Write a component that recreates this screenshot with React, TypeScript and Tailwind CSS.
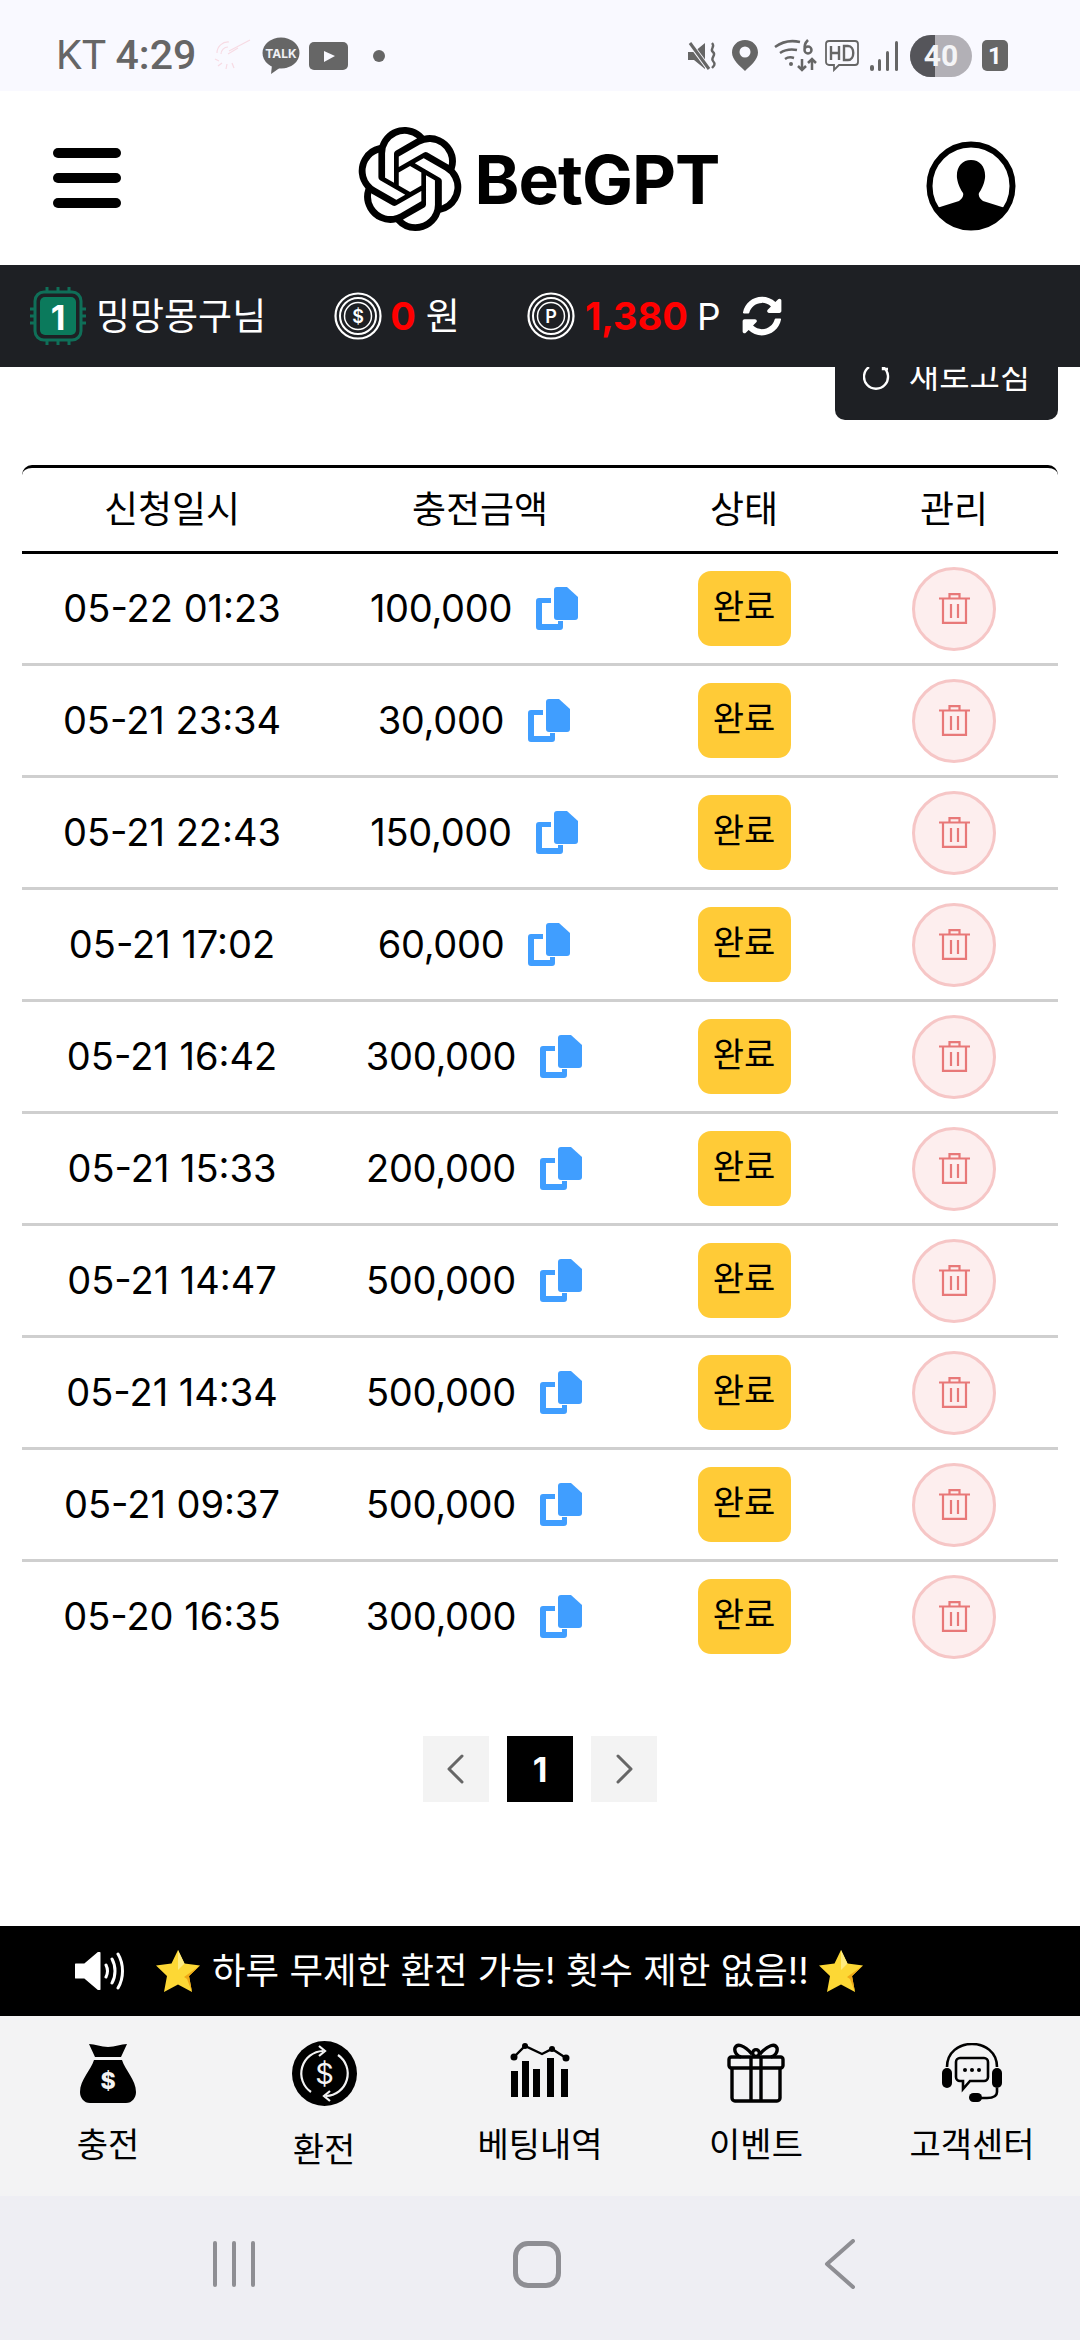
import { SiOpenai } from 'react-icons/si';
import { FaSyncAlt } from 'react-icons/fa';

const rows = [
  { date: '05-22 01:23', amount: '100,000' },
  { date: '05-21 23:34', amount: '30,000' },
  { date: '05-21 22:43', amount: '150,000' },
  { date: '05-21 17:02', amount: '60,000' },
  { date: '05-21 16:42', amount: '300,000' },
  { date: '05-21 15:33', amount: '200,000' },
  { date: '05-21 14:47', amount: '500,000' },
  { date: '05-21 14:34', amount: '500,000' },
  { date: '05-21 09:37', amount: '500,000' },
  { date: '05-20 16:35', amount: '300,000' },
];

const StatusLeft = () => (
  <div className="flex items-center">
    <svg width="40" height="34" viewBox="0 0 40 34" fill="none" stroke="#f7dbe4" strokeWidth="1.2" className="ml-[16px]">
      <path d="M5 14a11 11 0 0 1 12-11M9 15a7 7 0 0 1 7-7M17 12 38 1M26 9 16 15M3 20l4 2M6 27l4-3M14 30l1-5M22 29l-2-5" />
    </svg>
    <svg width="38" height="38" viewBox="0 0 38 38" className="ml-[10px]">
      <ellipse cx="19" cy="16" rx="18.500" ry="15.500" fill="#666" />
      <path d="M10 28l-1 9 10-7z" fill="#666" />
      <text x="19" y="21" textAnchor="middle" fontSize="12" fontWeight="700" fontFamily="Inter" fill="#f0f0f4">TALK</text>
    </svg>
    <svg width="39" height="28" viewBox="0 0 39 28" className="ml-[9px]">
      <rect width="39" height="28" rx="5" fill="#666" />
      <path d="M15 9l11 5-11 6z" fill="#f9f9ff" />
    </svg>
    <span className="ml-[25px] w-[12px] h-[12px] rounded-full bg-[#666]" />
  </div>
);

const StatusRight = () => (
  <div className="flex items-center">
    <svg width="30" height="30" viewBox="0 0 30 30" className="mr-[15px]">
      <path d="M1 11h6l11-9v26l-11-9H1z" fill="#666" />
      <path d="M2 1l20 27" stroke="#f9f9ff" strokeWidth="5" />
      <path d="M3 2l19 26" stroke="#666" strokeWidth="3" />
      <path d="M25 2c4 4-3 6 1 9s-3 6 0 9 1 5-1 7" stroke="#666" strokeWidth="2.400" fill="none" />
    </svg>
    <svg width="26" height="31" viewBox="0 0 26 31" className="mr-[16px]">
      <path d="M13 0C5.500 0 0 5.500 0 12.500 0 20 8 26 13 31c5-5 13-11 13-18.500C26 5.500 20.500 0 13 0z" fill="#666" />
      <circle cx="13" cy="12" r="5.500" fill="#f9f9ff" />
    </svg>
    <svg width="43" height="33" viewBox="0 0 43 33" fill="none" stroke="#666" strokeWidth="2.500" className="mr-[8px]">
      <path d="M1 8c8-6 16-7 25-5M6 14c6-4 12-4 17-3M11 20c3-2 6-2 9-1" />
      <circle cx="17" cy="25" r="2" fill="#666" stroke="none" />
      <path d="M34 1c-3 3-4 6-3 9M28 20v11M24 27l4 4 4-4M38 31V20M34 24l4-4 4 4" />
      <circle cx="34" cy="11" r="3.500" />
    </svg>
    <svg width="34" height="32" viewBox="0 0 34 32" fill="none" stroke="#666" strokeWidth="1.800" className="mr-[11px]">
      <path d="M4 1h26a3 3 0 0 1 3 3v18a3 3 0 0 1-3 3H14l-5 5v-5H4a3 3 0 0 1-3-3V4a3 3 0 0 1 3-3z" />
      <path d="M6 6v14M6 13h8M14 6v14M19 6v14h4c7 0 7-14 0-14z" strokeWidth="2.400" />
    </svg>
    <svg width="28" height="30" viewBox="0 0 28 30" fill="#666" className="mr-[12px]">
      <rect x="0" y="24" width="4" height="6" rx="2" />
      <rect x="8" y="18" width="3" height="12" rx="1.500" />
      <rect x="16" y="10" width="3" height="20" rx="1.500" />
      <rect x="25" y="0" width="3" height="30" rx="1.500" />
    </svg>
    <div className="relative w-[62px] h-[42px] rounded-full overflow-hidden bg-[#b2b0b6] mr-[10px]">
      <div className="absolute left-0 top-0 h-full w-[25px] bg-[#55555a]" />
      <span className="absolute inset-0 flex items-center justify-center text-[#f4f4f6] text-[30px] font-bold font-['Roboto',sans-serif]">40</span>
    </div>
    <div className="w-[26px] h-[31px] rounded-[5px] bg-[#666] flex items-center justify-center text-[#f9f9ff] text-[24px] font-bold font-['Roboto',sans-serif]">1</div>
  </div>
);

const Coin = ({ mark }: { mark: string }) => (
  <svg width="48" height="48" viewBox="0 0 48 48" fill="none" stroke="#fff">
    <circle cx="24" cy="24" r="22.500" strokeWidth="2.200" />
    <circle cx="24" cy="24" r="18" strokeWidth="2" />
    <circle cx="24" cy="24" r="13.500" strokeWidth="1.500" />
    <text x="24" y="30.500" textAnchor="middle" fontSize="18" fontWeight="600" fontFamily="Inter" fill="#fff" stroke="none">{mark}</text>
  </svg>
);

const Chip = () => (
  <svg width="56" height="58" viewBox="0 0 56 58">
    <path d="M6 22H0M6 29H0M6 36H0M56 22h-6M56 29h-6M56 36h-6M17 6V0M28 6V0M39 6V0M17 58v-6M28 58v-6M39 58v-6" stroke="#0f6f58" strokeWidth="3" />
    <rect x="5" y="5" width="46" height="48" rx="9" fill="#1e2024" stroke="#0f6f58" strokeWidth="3" />
    <rect x="10" y="10" width="36" height="38" rx="5" fill="#0b7a5c" />
    <text x="28" y="43" textAnchor="middle" fontSize="34" fontWeight="700" fontFamily="Inter" fill="#fff">1</text>
  </svg>
);

const CopyIcon = () => (
  <svg width="42" height="43" viewBox="0 0 42 43" fill="#409eff">
    <path d="M21 0h10l11 10v20a3 3 0 0 1-3 3H21a3 3 0 0 1-3-3V3a3 3 0 0 1 3-3z" />
    <path d="M15 11v5H6v21h16v-3h5v6a3 3 0 0 1-3 3H3a3 3 0 0 1-3-3V14a3 3 0 0 1 3-3z" />
  </svg>
);

const TrashIcon = () => (
  <svg width="31" height="31" viewBox="0 0 31 31" fill="none" stroke="#e87878" strokeWidth="2.200">
    <path d="M0 5.500h31M10.500 5.500V1.200h10v4.300M4 5.500v24.300h23V5.500M12 11v14M19 11v14" />
  </svg>
);

const Star = () => (
  <svg width="44" height="42" viewBox="0 0 44 42">
    <path d="M22 0l6.500 13.500L44 15.500 33 26l3 16-14-7.500L8 42l3-16L0 15.500l15.500-2z" fill="#fdd835" />
    <path d="M22 0l6.500 13.500L22 20z" fill="#ffec80" />
    <path d="M44 15.500 33 26l3 16-5-13-3-2z" fill="#f0a818" />
  </svg>
);

const BagIcon = () => (
  <svg width="56" height="60" viewBox="0 0 56 60">
    <path d="M9 1c6 0 12 3 19 3s13-3 19-3l-6 13H15z" fill="#000" />
    <path d="M14 17h28c3 10 14 20 14 32 0 6-4 11-10 11H10C4 60 0 55 0 49c0-12 11-22 14-32z" fill="#000" />
    <text x="28" y="46" textAnchor="middle" fontSize="23" fontWeight="800" fontFamily="Inter" fill="#f3f3f4">$</text>
  </svg>
);

const ExchangeIcon = () => (
  <svg width="65" height="65" viewBox="0 0 65 65">
    <circle cx="32.500" cy="32.500" r="32.500" fill="#000" />
    <path d="M19 51A22.500 22.500 0 0 1 31 10M46 14a22.500 22.500 0 0 1-12 41" fill="none" stroke="#f3f3f4" strokeWidth="2.200" />
    <path d="M27 5l6 5-6 5M38 50l-6 5 6 5" fill="none" stroke="#f3f3f4" strokeWidth="2.200" />
    <text x="32.500" y="43" textAnchor="middle" fontSize="29" fontFamily="Inter" fill="#f3f3f4">$</text>
  </svg>
);

const ChartIcon = () => (
  <svg width="60" height="60" viewBox="0 0 60 60" fill="#000">
    <rect x="1" y="28" width="7" height="26" />
    <rect x="12" y="18" width="7" height="36" />
    <rect x="23" y="26" width="7" height="28" />
    <rect x="37" y="15" width="7" height="39" />
    <rect x="51" y="26" width="7" height="28" />
    <path d="M4 14 15 3l17 8 10-5 14 9" fill="none" stroke="#000" strokeWidth="2.400" />
    <circle cx="4" cy="14" r="3.500" />
    <circle cx="15" cy="3" r="3" />
    <circle cx="42" cy="6" r="3" />
    <circle cx="56" cy="15" r="3.500" />
  </svg>
);

const GiftIcon = () => (
  <svg width="58" height="60" viewBox="0 0 58 60" fill="none" stroke="#000" strokeWidth="3.400" strokeLinejoin="round">
    <rect x="2" y="14" width="54" height="11" rx="2.500" />
    <path d="M5 25v30a3 3 0 0 0 3 3h42a3 3 0 0 0 3-3V25M24 14v44M34 14v44" />
    <path d="M25 11C17 2 10 0 8 5c-1 4 2 8 6 9M33 11c8-9 15-11 17-6 1 4-2 8-6 9" />
    <circle cx="29" cy="10" r="3.400" />
  </svg>
);

const HeadsetIcon = () => (
  <svg width="60" height="60" viewBox="0 0 60 60" fill="none" stroke="#000" strokeWidth="2.600">
    <path d="M5 24C5 9 17 1 30 1s25 8 25 23" />
    <rect x="0" y="25" width="10" height="20" rx="5" fill="#000" stroke="none" />
    <rect x="50" y="25" width="10" height="20" rx="5" fill="#000" stroke="none" />
    <path d="M18 15h24a4 4 0 0 1 4 4v15a4 4 0 0 1-4 4H28l-7 8v-8h-3a4 4 0 0 1-4-4V19a4 4 0 0 1 4-4z" />
    <circle cx="23" cy="27" r="2" fill="#000" stroke="none" />
    <circle cx="30" cy="27" r="2" fill="#000" stroke="none" />
    <circle cx="37" cy="27" r="2" fill="#000" stroke="none" />
    <path d="M55 45v4c0 5-5 6-10 6h-8" />
    <rect x="27" y="50" width="13" height="9" rx="4.500" fill="#000" stroke="none" />
  </svg>
);

const navItems = [
  { label: '충전', icon: <BagIcon />, labelClass: 'mt-[20px]' },
  { label: '환전', icon: <ExchangeIcon />, labelClass: 'mt-[25px]' },
  { label: '베팅내역', icon: <ChartIcon />, labelClass: 'mt-[20px]' },
  { label: '이벤트', icon: <GiftIcon />, labelClass: 'mt-[20px]' },
  { label: '고객센터', icon: <HeadsetIcon />, labelClass: 'mt-[20px]' },
];

export default function App() {
  return (
    <div className="w-[1080px] h-[2340px] flex flex-col bg-white overflow-hidden text-black font-['Inter','Noto_Sans_CJK_KR',sans-serif]">
      {/* status bar */}
      <div className="h-[91px] shrink-0 bg-[#f9f9ff] flex items-center justify-between pl-[56px] pr-[72px] pt-[20px]">
        <div className="flex items-center">
          <span className="text-[41px] leading-none text-[#666] font-['Roboto',sans-serif]">KT <span className="font-medium">4:29</span></span>
          <StatusLeft />
        </div>
        <StatusRight />
      </div>

      {/* header */}
      <header className="h-[174px] shrink-0 flex items-center justify-between pl-[53px] pr-[64px] pt-[6px] relative z-10 bg-white">
        <div className="flex flex-col gap-[15px] w-[68px] -mt-[6px]">
          <span className="h-[10px] rounded-full bg-black" />
          <span className="h-[10px] rounded-full bg-black" />
          <span className="h-[10px] rounded-full bg-black" />
        </div>
        <div className="flex items-center gap-[13px] ml-[30px] -mt-[4px]">
          <SiOpenai className="w-[104px] h-[104px] text-black" />
          <span className="text-[68px] leading-none font-bold tracking-[-1px]">BetGPT</span>
        </div>
        <svg width="90" height="90" viewBox="0 0 90 90" className="mt-[10px]">
          <circle cx="45" cy="45" r="41.500" fill="#fff" stroke="#000" strokeWidth="6" />
          <path d="M45 19c-9 0-15 7-14 18 1 7 4 12 6 15 1 3-1 6-4 8L14 66 9.500 67A42 42 0 0 0 80.500 67L76 66 57 60c-3-2-5-5-4-8 2-3 5-8 6-15 1-11-5-18-14-18z" fill="#000" />
        </svg>
      </header>

      {/* member bar */}
      <div className="h-[102px] shrink-0 bg-[#1e2024] flex items-center pl-[30px] text-white relative z-10">
        <Chip />
        <span className="ml-[10px] text-[37px] leading-none">밍망몽구님</span>
        <div className="ml-[68px]"><Coin mark="$" /></div>
        <span className="ml-[8px] text-[38px] leading-none font-bold text-[#ff0000]">0</span>
        <span className="ml-[10px] text-[37px] leading-none">원</span>
        <div className="ml-[67px]"><Coin mark="P" /></div>
        <span className="ml-[10px] text-[38px] leading-none font-bold text-[#ff0000]">1,380</span>
        <span className="ml-[9px] text-[37px] leading-none">P</span>
        <FaSyncAlt className="ml-[21px] w-[40px] h-[40px] text-white" />
      </div>

      <main className="flex-1 flex flex-col px-[22px]">
        <div className="flex justify-end">
          <button className="-mt-[34px] w-[223px] h-[87px] rounded-[10px] bg-[#1e2024] text-white flex items-center justify-center gap-[18px] text-[33px]">
            <svg width="28" height="28" viewBox="0 0 28 28" fill="none" stroke="#fff" strokeWidth="2.400">
              <path d="M20 4a12 12 0 1 1-14 0M20 1v5h5" />
            </svg>
            새로고침
          </button>
        </div>

        {/* table */}
        <div className="mt-[45px] border-t-[3px] border-black rounded-t-[10px]">
          <div className="h-[86px] border-b-[3px] border-black grid grid-cols-[300px_316px_212px_208px] items-center text-center text-[37px]">
            <span>신청일시</span>
            <span>충전금액</span>
            <span>상태</span>
            <span>관리</span>
          </div>
          {rows.map((row, i) => (
            <div
              key={row.date}
              className={`h-[112px] border-b-[3px] grid grid-cols-[300px_316px_212px_208px] items-center text-[38px] ${i < rows.length - 1 ? 'border-[#cfcfcf]' : 'border-transparent'}`}
            >
              <span className="text-center">{row.date}</span>
              <div className="flex items-center justify-center gap-[24px] mr-[12px]">
                <span className="tracking-[-0.3px]">{row.amount}</span>
                <CopyIcon />
              </div>
              <div className="flex justify-center">
                <span className="w-[93px] h-[75px] rounded-[13px] bg-[#ffcb37] flex items-center justify-center text-[34px] pb-[4px]">완료</span>
              </div>
              <div className="flex justify-center">
                <span className="w-[84px] h-[84px] rounded-full border-[3px] border-[#f6c6c6] bg-[#fdeeee] flex items-center justify-center">
                  <TrashIcon />
                </span>
              </div>
            </div>
          ))}
        </div>

        {/* pagination */}
        <div className="mt-[62px] flex justify-center gap-[18px]">
          <span className="w-[66px] h-[66px] bg-[#f3f3f3] flex items-center justify-center">
            <svg width="18" height="30" viewBox="0 0 18 30" fill="none" stroke="#666" strokeWidth="3" strokeLinecap="round" strokeLinejoin="round">
              <path d="M15 2 2 15l13 13" />
            </svg>
          </span>
          <span className="w-[66px] h-[66px] bg-black text-white flex items-center justify-center text-[34px] font-bold">1</span>
          <span className="w-[66px] h-[66px] bg-[#f3f3f3] flex items-center justify-center">
            <svg width="18" height="30" viewBox="0 0 18 30" fill="none" stroke="#666" strokeWidth="3" strokeLinecap="round" strokeLinejoin="round">
              <path d="m3 2 13 13L3 28" />
            </svg>
          </span>
        </div>
      </main>

      {/* notice */}
      <div className="h-[90px] shrink-0 bg-black text-white flex items-center pl-[75px] text-[36.5px]">
        <svg width="50" height="38" viewBox="0 0 50 38" fill="none" stroke="#fff" strokeWidth="3" strokeLinecap="round">
          <path d="M1 13h9L24 1v36L10 25H1z" fill="#fff" stroke="#fff" strokeLinejoin="round" />
          <path d="M31 13c2 4 2 8 0 12M37 7c4 7 4 17 0 24M43 2c6 10 6 24 0 34" />
        </svg>
        <span className="ml-[31px] flex items-center"><Star /></span>
        <span className="ml-[12px] whitespace-nowrap leading-none">하루 무제한 환전 가능! 횟수 제한 없음!!</span>
        <span className="ml-[10px] flex items-center"><Star /></span>
      </div>

      {/* bottom nav */}
      <nav className="h-[180px] shrink-0 bg-[#f3f3f4] grid grid-cols-5 pt-[25px]">
        {navItems.map((item) => (
          <div key={item.label} className="flex flex-col items-center">
            <div className="h-[64px] flex items-center justify-center">{item.icon}</div>
            <span className={`${item.labelClass} text-[34px] leading-[40px]`}>{item.label}</span>
          </div>
        ))}
      </nav>

      {/* android nav */}
      <div className="h-[144px] shrink-0 bg-[#eeeef3] flex items-center pb-[8px] pl-[213px]">
        <div className="flex gap-[15px]">
          <span className="w-[4px] h-[46px] rounded-full bg-[#8e8e93]" />
          <span className="w-[4px] h-[46px] rounded-full bg-[#8e8e93]" />
          <span className="w-[4px] h-[46px] rounded-full bg-[#8e8e93]" />
        </div>
        <span className="ml-[258px] w-[48px] h-[47px] rounded-[15px] border-[5px] border-[#8e8e93]" />
        <svg width="32" height="50" viewBox="0 0 32 50" fill="none" stroke="#8e8e93" strokeWidth="4" strokeLinecap="round" strokeLinejoin="round" className="ml-[263px]">
          <path d="M29 2 3 25l26 23" />
        </svg>
      </div>
    </div>
  );
}
